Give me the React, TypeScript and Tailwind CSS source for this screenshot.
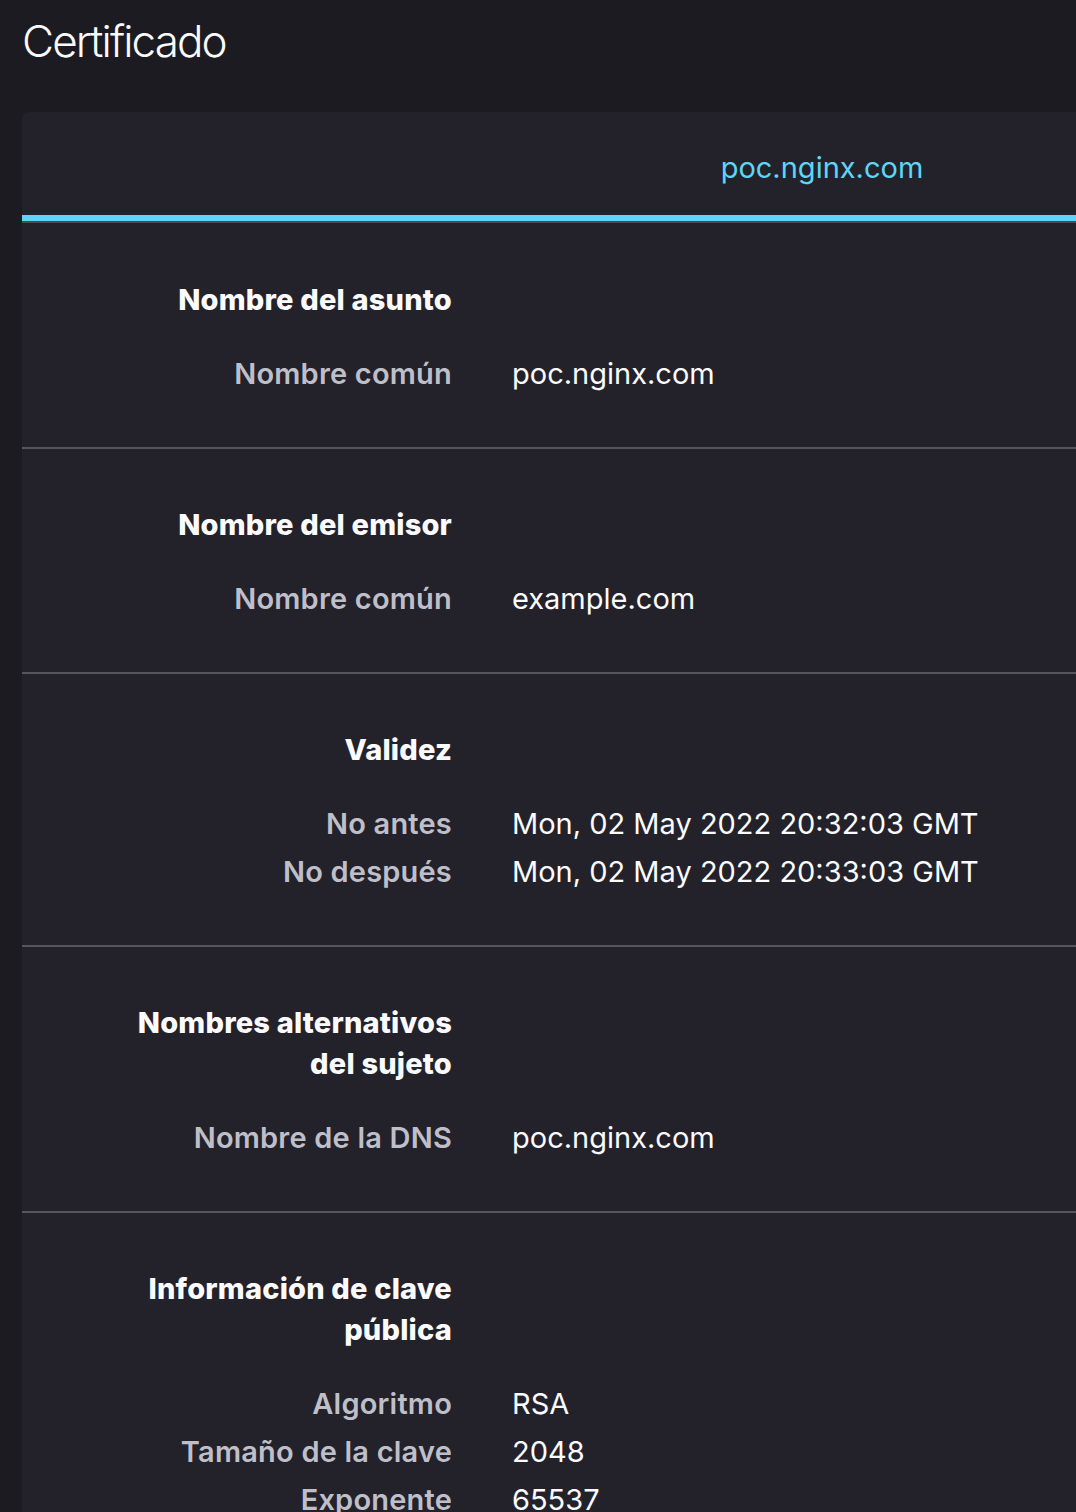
import React from "react";

type Row = { label: string; value: string };
type Section = { title: string[]; rows: Row[] };

const sections: Section[] = [
  { title: ["Nombre del asunto"], rows: [{ label: "Nombre común", value: "poc.nginx.com" }] },
  { title: ["Nombre del emisor"], rows: [{ label: "Nombre común", value: "example.com" }] },
  {
    title: ["Validez"],
    rows: [
      { label: "No antes", value: "Mon, 02 May 2022 20:32:03 GMT" },
      { label: "No después", value: "Mon, 02 May 2022 20:33:03 GMT" },
    ],
  },
  {
    title: ["Nombres alternativos", "del sujeto"],
    rows: [{ label: "Nombre de la DNS", value: "poc.nginx.com" }],
  },
  {
    title: ["Información de clave", "pública"],
    rows: [
      { label: "Algoritmo", value: "RSA" },
      { label: "Tamaño de la clave", value: "2048" },
      { label: "Exponente", value: "65537" },
    ],
  },
];

export default function App() {
  return (
    <div className="min-h-screen overflow-hidden bg-[#1c1b22] font-['Inter','Noto_Sans',sans-serif] text-[#fbfbfe]">
      <h1 className="pl-[22px] pt-[14px] text-[44px] font-light leading-[54px] tracking-[-1.9px]">Certificado</h1>
      <div className="ml-[22px] mt-[44px] w-[1600px] rounded-tl-lg bg-[#23222b]">
        <div className="border-b-[6px] border-[#5dd6f6] pt-[32px] pb-[23px] text-center text-[29px] leading-[48px] text-[#5dd6f6]">
          poc.nginx.com
        </div>
        <div className="h-[2px] bg-[#4a4a52]" />
        {sections.map((s, i) => (
          <div key={i}>
            {i > 0 && <div className="h-[2px] bg-[#55555e]" />}
            <div className={i === 0 ? "pt-[56px] pb-[49px] pl-[90px]" : "pt-[55px] pb-[49px] pl-[90px]"}>
              <div className="grid grid-cols-[340px_1fr] gap-x-[60px]">
                <div className="text-right text-[29px] font-extrabold leading-[41px] tracking-[0.2px]">
                  {s.title.map((t, j) => (
                    <div key={j}>{t}</div>
                  ))}
                </div>
                <div />
              </div>
              <div className="mt-[30px] grid grid-cols-[340px_1fr] gap-x-[60px]">
                {s.rows.map((r, k) => (
                  <React.Fragment key={k}>
                    <div className="text-right text-[29px] font-semibold leading-[48px] tracking-[0.2px] text-[#bfbfc9]">{r.label}</div>
                    <div className="text-[29px] leading-[48px]">{r.value}</div>
                  </React.Fragment>
                ))}
              </div>
            </div>
          </div>
        ))}
      </div>
    </div>
  );
}
